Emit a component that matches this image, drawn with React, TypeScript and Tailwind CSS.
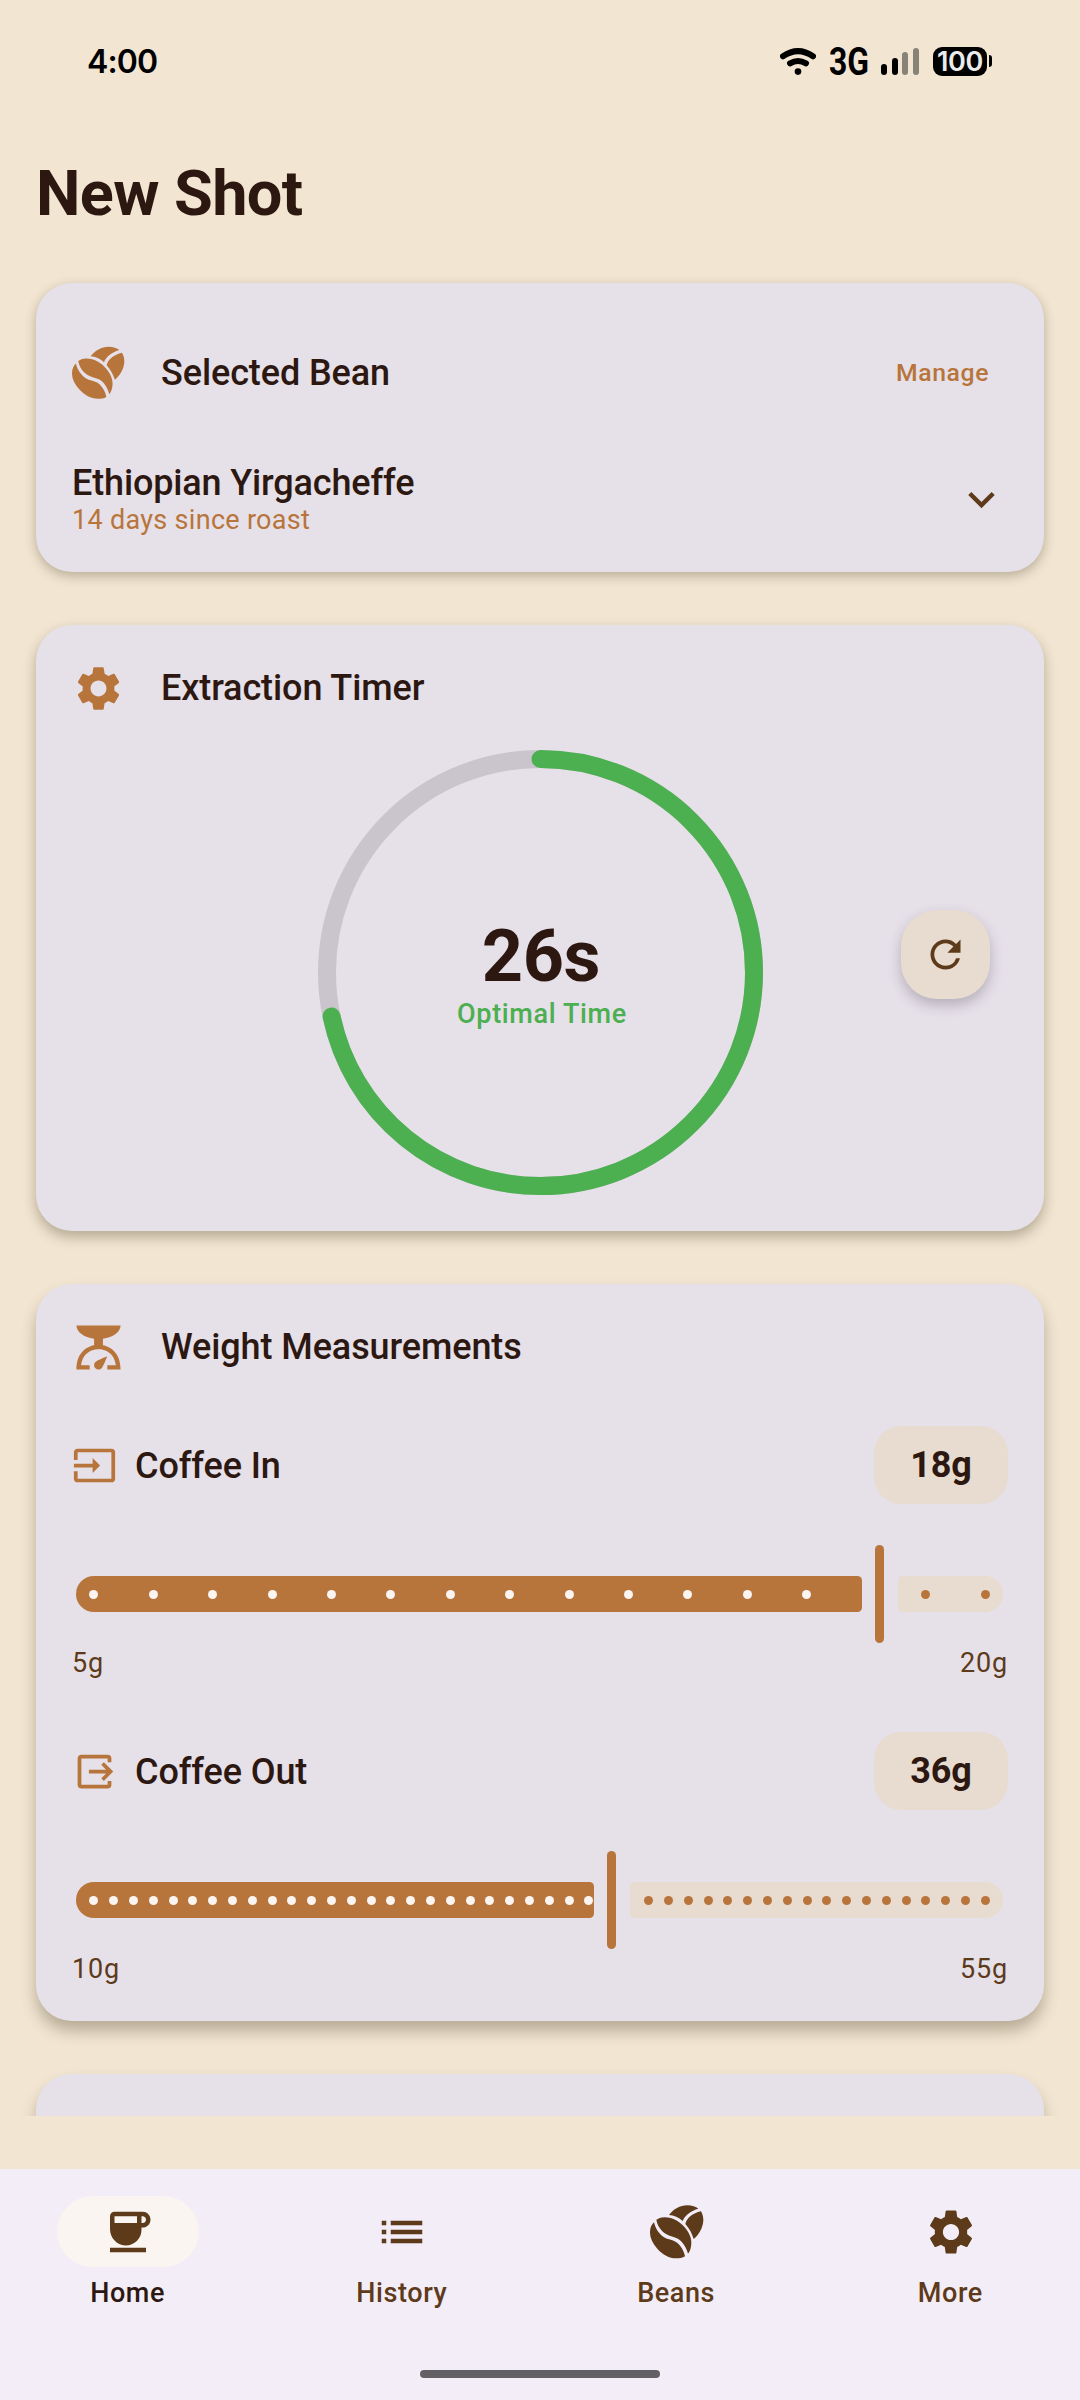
import type { ReactNode } from "react";
import {
  MdCoffee,
  MdInput,
  MdKeyboardArrowDown,
  MdList,
  MdOutput,
  MdRefresh,
  MdScale,
  MdSettings,
} from "react-icons/md";

function BeansIcon() {
  return (
    <svg viewBox="0 -1 162 162" className="size-[54px]" fill="currentColor">
      <path d="M19 43Q30 36 43 36C70 36 90 50 104 66C118 82 124 98 124 112C124 126 120 138 114 145C110 128 98 108 84 100C72 94 60 94 48 86C32 76 22 60 19 43Z" />
      <path d="M12 51C16 70 28 86 42 96C54 104 66 102 78 110C92 120 102 136 105 153C98 158 88 159 78 159C58 159 38 148 22 130C8 114 0 98 0 82C0 68 4 58 12 51Z" />
      <path d="M57 29C70 12 90 0 112 0C126 0 138 4 145 10C124 16 104 30 98 47C86 36 72 30 57 29Z" />
      <path d="M153 18C159 28 160 38 160 46C158 68 148 86 131 101C126 84 118 70 106 56C110 38 128 24 153 18Z" />
    </svg>
  );
}

function StatusBar() {
  return (
    <div className="flex h-[122px] items-center justify-between pr-[88px] pl-[87px] text-black">
      <span className="pt-px font-['Inter',sans-serif] text-[32px] font-semibold tracking-[-0.9px]">4:00</span>
      <div className="flex items-center">
        <svg viewBox="0 0 36 27" className="h-[27px] w-[36px]" fill="none" stroke="black" strokeWidth="6" strokeLinecap="round">
          <path d="M3 8.3Q18-2 33 8.3M10 15.3Q18 10.7 26 15.3" />
          <circle cx="18" cy="23.6" r="3.3" fill="black" stroke="none" />
        </svg>
        <span className="ml-[13px] w-[40px] origin-left scale-x-[0.84] pt-[2px] font-['Roboto',sans-serif] text-[38px] leading-none font-bold">3G</span>
        <div className="ml-[12px] flex h-[27px] items-end gap-[4.6px]">
          <i className="h-[11px] w-[6px] rounded-full bg-black" />
          <i className="h-[17px] w-[6px] rounded-full bg-black" />
          <i className="h-[23px] w-[6px] rounded-full bg-[#888277]" />
          <i className="h-[27px] w-[6px] rounded-full bg-[#888277]" />
        </div>
        <div className="ml-[14px] flex h-[29px] w-[54px] items-center justify-center rounded-[9px] bg-black font-['Inter',sans-serif] text-[27px] leading-none font-semibold tracking-[-0.4px] text-[#ebebeb]">
          100
        </div>
        <i className="ml-[2px] h-[12px] w-[3px] rounded-r-[3px] bg-black" />
      </div>
    </div>
  );
}

function CardHeader({ icon, title }: { icon: ReactNode; title: string }) {
  return (
    <div className="flex h-[54px] items-center gap-[36px]">
      <span className="flex size-[53px] items-center justify-center text-[#b8753b]">{icon}</span>
      <h2 className="text-[36px] leading-[54px] font-medium tracking-[-0.1px]">{title}</h2>
    </div>
  );
}

const TRACK = 927;
const INSET = 18;

function Slider({ min, max, value }: { min: number; max: number; value: number }) {
  const steps = max - min;
  const thumb = (TRACK * (value - min)) / steps;
  const leftEnd = thumb - 18;
  const rightStart = thumb + 18;
  const ticks = Array.from({ length: steps + 1 }, (_, i) => INSET + ((TRACK - INSET * 2) * i) / steps);
  return (
    <div className="mr-[4.7px] ml-[4.3px] flex h-[98px] items-center">
      <div
        className="relative h-9 shrink-0 rounded-l-[18px] rounded-r-[4.5px] bg-[#b8753b]"
        style={{ width: leftEnd }}
      >
        {ticks
          .filter((x) => x <= leftEnd)
          .map((x) => (
            <i key={x} className="absolute top-[13.5px] size-[9px] rounded-full bg-[#faf5f0]" style={{ left: x - 4.8 }} />
          ))}
      </div>
      <div className="mx-[13.5px] h-[98px] w-[9px] shrink-0 rounded-full bg-[#b8753b]" />
      <div className="relative h-9 flex-1 rounded-l-[4.5px] rounded-r-[18px] bg-[#e8dcd0]">
        {ticks
          .filter((x) => x >= rightStart)
          .map((x) => (
            <i
              key={x}
              className="absolute top-[13.5px] size-[9px] rounded-full bg-[#b8753b]"
              style={{ left: x - rightStart - 4.5 }}
            />
          ))}
      </div>
    </div>
  );
}

function Measurement(props: { icon: ReactNode; label: string; min: number; max: number; value: number }) {
  const { icon, label, min, max, value } = props;
  return (
    <div>
      <div className="flex h-[78px] items-center">
        <span className="mr-[18px] text-[#b8753b]">{icon}</span>
        <span className="flex-1 pt-[2px] text-[36px] font-medium tracking-[-0.1px]">{label}</span>
        <span className="flex h-[78px] w-[134px] items-center justify-center rounded-[27px] bg-[#e8dcd0] text-[36px] font-bold tracking-[-0.1px]">
          {value}g
        </span>
      </div>
      <div className="mt-[41px]">
        <Slider min={min} max={max} value={value} />
      </div>
      <div className="mt-1 flex h-8 items-center justify-between text-[27px] leading-8 tracking-[0.8px] text-[#5d3a1a]">
        <span>{min}g</span>
        <span>{max}g</span>
      </div>
    </div>
  );
}

function TimerRing() {
  const r = 213.75;
  const length = 2 * Math.PI * r;
  return (
    <div className="relative size-[445px]">
      <svg viewBox="0 0 445.5 445.5" className="size-full -rotate-90" fill="none" strokeWidth="18">
        <circle cx="222.75" cy="222.75" r={r} stroke="#cac5cd" />
        <circle
          cx="222.75"
          cy="222.75"
          r={r}
          stroke="#4caf50"
          strokeLinecap="round"
          strokeDasharray={`${(length * 258) / 360} ${length}`}
        />
      </svg>
      <div className="absolute inset-0 flex flex-col items-center justify-center">
        <span className="pl-[2px] text-[72px] leading-[84px] font-bold tracking-[-0.4px]">26s</span>
        <span className="-mt-px mb-px pl-[4px] text-[27px] leading-8 font-medium tracking-[0.65px] text-[#4caf50]">
          Optimal Time
        </span>
      </div>
    </div>
  );
}

function NavItem({ icon, label, active = false }: { icon: ReactNode; label: string; active?: boolean }) {
  return (
    <div className="flex flex-1 flex-col items-center">
      <span
        className={
          active
            ? "flex h-[71px] w-[142px] items-center justify-center rounded-full bg-[#faf5f0]"
            : "flex h-[71px] w-[142px] items-center justify-center"
        }
      >
        {icon}
      </span>
      <span
        className={
          active
            ? "mt-[8px] pr-px text-[27px] leading-9 font-medium tracking-[0.6px] text-[#2c1810]"
            : "mt-[8px] pr-px text-[27px] leading-9 font-medium tracking-[0.6px]"
        }
      >
        {label}
      </span>
    </div>
  );
}

export default function App() {
  return (
    <div className="flex h-[2400px] w-[1080px] flex-col overflow-hidden bg-[#f2e6d3] font-['Roboto',sans-serif] text-[#2c1810]">
      <StatusBar />
      <main className="h-[1994px] overflow-hidden px-9">
        <h1 className="pt-[35px] text-[63px] leading-[74px] font-bold tracking-[-0.6px]">New Shot</h1>

        <section className="mt-[52px] h-[289px] rounded-[36px] bg-[#e6e0e9] px-9 pt-9 shadow-[0_4px_12px_rgba(50,40,10,0.3)]">
          <div className="flex h-[108px] items-center justify-between">
            <CardHeader icon={<BeansIcon />} title="Selected Bean" />
            <button className="pr-[19px] text-[24.75px] font-medium tracking-[0.6px] text-[#b8753b]">Manage</button>
          </div>
          <div className="mt-[35px] flex items-center justify-between">
            <div>
              <p className="text-[36px] leading-[42px] font-medium tracking-[-0.15px]">Ethiopian Yirgacheffe</p>
              <p className="text-[27px] leading-8 tracking-[0.3px] text-[#b8753b]">14 days since roast</p>
            </div>
            <MdKeyboardArrowDown className="size-[53px] text-[#5d3a1a]" />
          </div>
        </section>

        <section className="mt-[53px] h-[606px] rounded-[36px] bg-[#e6e0e9] px-9 pt-9 shadow-[0_6px_13px_rgba(50,40,10,0.32)]">
          <CardHeader icon={<MdSettings className="size-[53px]" />} title="Extraction Timer" />
          <div className="mt-[35px] grid grid-cols-[1fr_auto_1fr] items-center">
            <span />
            <TimerRing />
            <button className="mr-[18px] mb-9 flex size-[89px] items-center justify-center justify-self-end rounded-[36px] bg-[#e8dcd0] text-[#5d3a1a] shadow-[0_6px_13px_rgba(50,45,60,0.27)]">
              <MdRefresh className="size-[45px]" />
            </button>
          </div>
        </section>

        <section className="mt-[53px] h-[737px] rounded-[36px] bg-[#e6e0e9] px-9 pt-9 shadow-[0_10px_15px_rgba(50,40,10,0.3)]">
          <CardHeader icon={<MdScale className="size-[53px]" />} title="Weight Measurements" />
          <div className="mt-[52px] flex flex-col gap-[53px]">
            <Measurement icon={<MdInput className="size-[45px]" />} label="Coffee In" min={5} max={20} value={18} />
            <Measurement icon={<MdOutput className="size-[45px]" />} label="Coffee Out" min={10} max={55} value={36} />
          </div>
        </section>

        <section className="mt-[53px] h-[300px] rounded-[36px] bg-[#e6e0e9] shadow-[0_10px_15px_rgba(50,40,10,0.28)]" />
      </main>

      <nav className="mt-[53px] flex flex-1 flex-col bg-[#f3edf7] pt-[27px] text-[#5d3a1a]">
        <div className="mr-px flex gap-[18px]">
          <NavItem active icon={<MdCoffee className="size-[54px]" />} label="Home" />
          <NavItem icon={<MdList className="size-[54px]" />} label="History" />
          <NavItem icon={<BeansIcon />} label="Beans" />
          <NavItem icon={<MdSettings className="size-[54px]" />} label="More" />
        </div>
        <div className="mx-auto mt-auto mb-[22px] h-2 w-[240px] rounded-full bg-[#626065]" />
      </nav>
    </div>
  );
}
